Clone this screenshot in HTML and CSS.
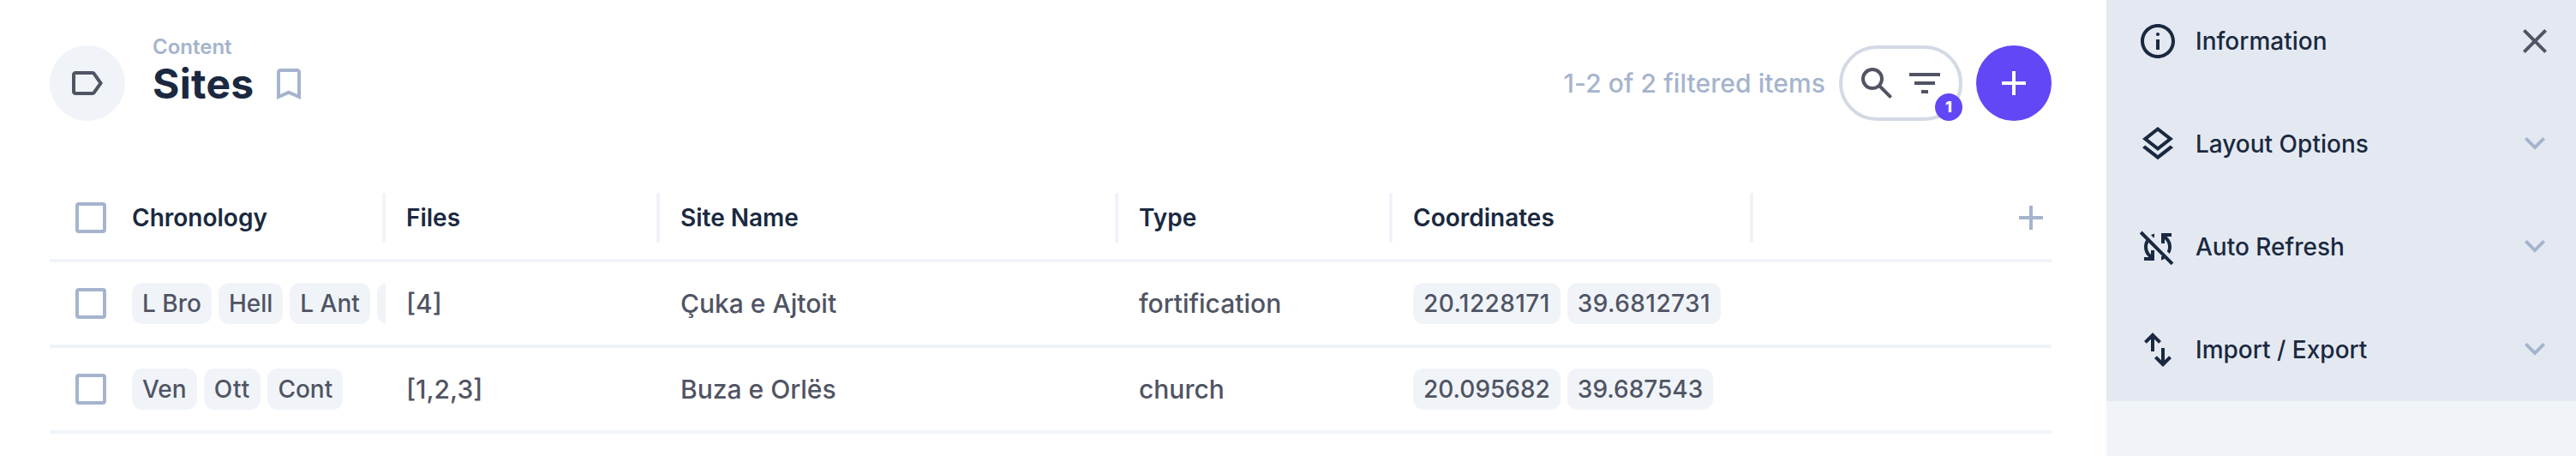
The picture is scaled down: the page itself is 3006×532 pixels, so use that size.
FILE: index.html
```html
<!DOCTYPE html>
<html lang="en">
<head>
<meta charset="utf-8">
<title>Sites</title>
<link rel="stylesheet" href="styles.css">
</head>
<body>
<div class="app">
  <main class="main">
    <header class="header">
      <div class="header-icon">
        <svg class="icon" viewBox="0 0 24 24"><path d="M21 12l-4.35 6.15q-.275.4-.7125.625T15 19H5q-.825 0-1.4125-.5875T3 17V7q0-.825.5875-1.4125T5 5h10q.5 0 .9375.225T16.65 5.85L21 12Zm-2.45 0L15 7H5v10h10l3.55-5Z"/></svg>
      </div>
      <div class="title-block">
        <div class="headline">Content</div>
        <h1 class="title">Sites</h1>
      </div>
      <svg class="icon bookmark" viewBox="0 0 24 24"><path d="M5 21V5q0-.825.5875-1.4125T7 3h10q.825 0 1.4125.5875T19 5v16l-7-3-7 3Zm2-3.05 5-2.15 5 2.15V5H7v12.95Z"/></svg>
      <div class="actions">
        <span class="item-count">1-2 of 2 filtered items</span>
        <div class="search">
          <svg class="icon" viewBox="0 0 24 24"><path d="M19.6 21 13.3 14.7q-.75.6-1.725.95T9.5 16q-2.725 0-4.6125-1.8875T3 9.5 4.8875 4.8875 9.5 3t4.6125 1.8875T16 9.5q0 1.1-.35 2.075T14.7 13.3L21 19.6 19.6 21ZM9.5 14q1.875 0 3.1875-1.3125T14 9.5 12.6875 6.3125 9.5 5 6.3125 6.3125 5 9.5t1.3125 3.1875T9.5 14Z"/></svg>
          <svg class="icon" viewBox="0 0 24 24"><path d="M3 6h18v2H3zM6 11h12v2H6zM10 16h4v2h-4z"/></svg>
          <span class="badge">1</span>
        </div>
        <div class="add-button">
          <svg class="icon" viewBox="0 0 24 24"><path d="M11 19v-6H5v-2h6V5h2v6h6v2h-6v6h-2Z"/></svg>
        </div>
      </div>
    </header>

    <section class="table">
      <div class="row head">
        <div class="select"><span class="checkbox"></span></div>
        <div class="cell">Chronology</div>
        <div class="cell">Files</div>
        <div class="cell">Site Name</div>
        <div class="cell">Type</div>
        <div class="cell">Coordinates</div>
        <div class="add-column">
          <svg class="icon" viewBox="0 0 24 24"><path d="M11 19v-6H5v-2h6V5h2v6h6v2h-6v6h-2Z"/></svg>
        </div>
      </div>
      <div class="row">
        <div class="select"><span class="checkbox"></span></div>
        <div class="cell"><span class="chip">L Bro</span><span class="chip">Hell</span><span class="chip">L Ant</span><span class="chip"></span></div>
        <div class="cell">[4]</div>
        <div class="cell">Çuka e Ajtoit</div>
        <div class="cell">fortification</div>
        <div class="cell"><span class="chip digits">20.1228171</span><span class="chip digits">39.6812731</span></div>
      </div>
      <div class="row">
        <div class="select"><span class="checkbox"></span></div>
        <div class="cell"><span class="chip">Ven</span><span class="chip loose">Ott</span><span class="chip">Cont</span></div>
        <div class="cell">[1,2,3]</div>
        <div class="cell">Buza e Orlës</div>
        <div class="cell">church</div>
        <div class="cell"><span class="chip">20.095682</span><span class="chip">39.687543</span></div>
      </div>
    </section>
  </main>

  <aside class="sidebar">
    <div class="panel">
      <svg class="icon" viewBox="0 0 24 24"><circle cx="12" cy="8" r="1.05"/><path d="M11 11h2v6h-2zm1-9C6.48 2 2 6.48 2 12s4.48 10 10 10 10-4.48 10-10S17.52 2 12 2zm0 18c-4.41 0-8-3.59-8-8s3.59-8 8-8 8 3.59 8 8-3.59 8-8 8z"/></svg>
      <span class="panel-title">Information</span>
      <svg class="icon close" viewBox="0 0 24 24"><path d="M6.4 19 5 17.6 10.6 12 5 6.4 6.4 5 12 10.6 17.6 5 19 6.4 13.4 12 19 17.6 17.6 19 12 13.4Z"/></svg>
    </div>
    <div class="panel">
      <svg class="icon" viewBox="0 0 24 24"><path d="m11.99 18.54-7.37-5.73L3 14.07l9 7 9-7-1.63-1.27-7.38 5.74zM12 16l9-7-9-7-9 7 9 7zm0-11.47L17.74 9 12 13.47 6.26 9 12 4.53z"/></svg>
      <span class="panel-title">Layout Options</span>
      <svg class="icon chevron" viewBox="0 0 24 24"><path d="m12 15.375-6-6 1.4-1.4 4.6 4.6 4.6-4.6 1.4 1.4Z"/></svg>
    </div>
    <div class="panel">
      <svg class="icon" viewBox="0 0 24 24"><path d="M19.8 22.6 1.4 4.2 2.8 2.8 21.2 21.2ZM4 20v-2h2.75l-.4-.35Q5.05 16.5 4.525 15.05T4 12.05q0-1.125.287-2.162T5.1 7.95l1.5 1.5q-.3.6-.45 1.25T6 12.05q0 1.125.425 2.188T7.75 16.2l.25.25V14h2v6ZM18.85 16.05l-1.45-1.45q.3-.6.45-1.25T18 11.95q0-1.125-.425-2.187T16.25 7.8L16 7.55V10h-2V4h6v2h-2.75l.4.35q1.225 1.225 1.787 2.663T20 11.95q0 1.1-.3 2.138T18.85 16.05ZM9.45 6.6 8 5.15q.45-.3.95-.5T10 4.25v2.1q-.15.05-.275.112T9.45 6.6ZM14 19.75v-2.1q.15-.05.288-.112t.262-.138L16 18.85q-.45.3-.95.513T14 19.75Z"/></svg>
      <span class="panel-title">Auto Refresh</span>
      <svg class="icon chevron" viewBox="0 0 24 24"><path d="m12 15.375-6-6 1.4-1.4 4.6 4.6 4.6-4.6 1.4 1.4Z"/></svg>
    </div>
    <div class="panel">
      <svg class="icon" viewBox="0 0 24 24"><path d="M8 13V5.825L5.425 8.4 4 7l5-5 5 5-1.425 1.4L10 5.825V13Zm7 9-5-5 1.425-1.4L14 18.175V11h2v7.175l2.575-2.575L20 17Z"/></svg>
      <span class="panel-title">Import / Export</span>
      <svg class="icon chevron" viewBox="0 0 24 24"><path d="m12 15.375-6-6 1.4-1.4 4.6 4.6 4.6-4.6 1.4 1.4Z"/></svg>
    </div>
  </aside>
</div>
</body>
</html>
```
FILE: styles.css
```css
* { box-sizing: border-box; }

body {
  margin: 0;
  background: #ffffff;
  color: #505464;
  font-family: Inter, "Liberation Sans", sans-serif;
  font-size: 30px;
  font-weight: 500;
}

.app {
  display: flex;
  height: 532px;
  overflow: hidden;
}

.main {
  width: 2458px;
  padding: 53px 64px 0 58px;
}

.icon {
  display: block;
  flex: none;
  width: 48px;
  height: 48px;
  fill: currentColor;
}

/* Page header */
.header {
  display: flex;
  align-items: center;
  height: 88px;
}

.header-icon {
  display: flex;
  align-items: center;
  justify-content: center;
  width: 88px;
  height: 88px;
  border-radius: 50%;
  background: #f0f4f9;
}

.title-block {
  margin: -23px 0 0 32px;
}

.headline {
  color: #a5b4cd;
  font-size: 24px;
  font-weight: 600;
  line-height: 24px;
}

.title {
  margin: 0;
  color: #1a2940;
  font-size: 48px;
  font-weight: 700;
  letter-spacing: 0.3px;
  line-height: 61px;
}

.bookmark {
  margin: 2px 0 0 16px;
  color: #a5b4cd;
}

.actions {
  display: flex;
  align-items: center;
  gap: 16px;
  margin-left: auto;
}

.item-count {
  color: #a5b4cd;
  letter-spacing: 0.08px;
}

.search {
  position: relative;
  display: flex;
  align-items: center;
  gap: 8px;
  width: 144px;
  height: 88px;
  padding-left: 16px;
  border: 4px solid #d3dae4;
  border-radius: 44px;
}

.badge {
  position: absolute;
  right: -4px;
  bottom: -4px;
  width: 32px;
  height: 32px;
  border-radius: 50%;
  background: #6147f6;
  color: #ffffff;
  font-size: 18px;
  font-weight: 800;
  line-height: 32px;
  text-align: center;
}

.add-button {
  display: flex;
  align-items: center;
  justify-content: center;
  width: 88px;
  height: 88px;
  border-radius: 50%;
  background: #6147f6;
  color: #ffffff;
}

/* Items table */
.table { margin-top: 65px; }

.row {
  display: grid;
  grid-template-columns: 72px 320px 320px 535px 320px 421px 1fr;
  align-items: center;
  height: 100px;
  border-bottom: 4px solid #f0f4f9;
}

.select { padding-left: 30px; }

.checkbox {
  display: block;
  width: 36px;
  height: 36px;
  border: 4px solid #a5b4cd;
  border-radius: 4px;
}

.cell {
  display: flex;
  align-items: center;
  gap: 8px;
  height: 58px;
  padding: 0 24px;
  overflow: hidden;
  white-space: nowrap;
}

.head .cell {
  border-right: 4px solid #f0f4f9;
  color: #1a2940;
  font-size: 28px;
  font-weight: 600;
}

.add-column {
  justify-self: end;
  color: #a5b4cd;
}

.chip {
  flex: none;
  height: 48px;
  padding: 0 12px;
  border-radius: 12px;
  background: #f0f4f9;
  font-size: 28px;
  line-height: 48px;
}

.chip.digits { letter-spacing: 0.42px; }

.chip.loose { letter-spacing: 1px; }

/* Sidebar */
.sidebar {
  width: 548px;
  background: #f0f4f9;
}

.panel {
  display: flex;
  align-items: center;
  height: 120px;
  padding: 0 24px 0 36px;
  background: #e4e9f1;
  color: #1a2940;
}

.panel:first-child {
  height: 108px;
  padding-bottom: 12px;
}

.panel-title {
  flex: 1;
  margin-left: 20px;
  font-size: 28px;
}

.close { color: #505464; }

.chevron { color: #a5b4cd; }
```
